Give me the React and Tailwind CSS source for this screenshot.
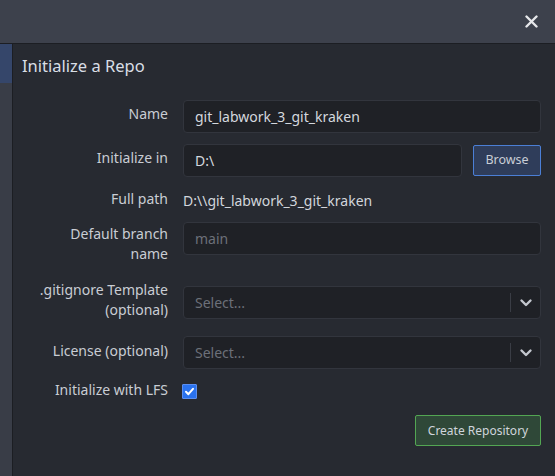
import { useState } from "react";

function Chevron() {
  return (
    <svg width="14" height="14" viewBox="0 0 14 14" fill="none">
      <path d="M2.5 4.5 L7 9 L11.5 4.5" stroke="#c3c7ce" strokeWidth="2.4" strokeLinecap="round" strokeLinejoin="round" />
    </svg>
  );
}

function Label({ children, className = "" }) {
  return (
    <div className={`w-[135px] shrink-0 text-right text-[14px] leading-[20px] text-[#c9cdd4] ${className}`}>
      {children}
    </div>
  );
}

function TextInput({ value, placeholder, className = "" }) {
  return (
    <div className={`h-[33px] flex items-center rounded-[4px] border border-[#32353d] bg-[#1f2126] px-[11px] text-[14px] ${className}`}>
      {value ? (
        <span className="text-[#d4d8de]">{value}</span>
      ) : (
        <span className="text-[#6c7079]">{placeholder}</span>
      )}
    </div>
  );
}

function SelectBox({ className = "" }) {
  return (
    <div className={`h-[33px] flex items-center rounded-[4px] border border-[#32353d] bg-[#1f2126] text-[14px] ${className}`}>
      <span className="flex-1 pl-[11px] text-[#6c7079]">Select...</span>
      <div className="w-px h-[19px] bg-[#3a3d45]" />
      <div className="w-[29px] flex justify-center">
        <Chevron />
      </div>
    </div>
  );
}

export default function App() {
  const [lfs, setLfs] = useState(true);

  return (
    <div className="w-[555px] h-[476px] flex flex-col bg-[#272a31] overflow-hidden" style={{ fontFamily: '"Noto Sans", "Open Sans", sans-serif' }}>
      <header className="h-[44px] shrink-0 flex items-center justify-end pr-[17px] bg-[#3d414c] border-b border-[#1c1e23]">
        <svg width="13" height="13" viewBox="0 0 13 13">
          <path d="M1.5 1.5 L11.5 11.5 M11.5 1.5 L1.5 11.5" stroke="#e6e7ea" strokeWidth="2.4" strokeLinecap="round" />
        </svg>
      </header>

      <div className="flex flex-1">
        <aside className="w-[13px] shrink-0 flex flex-col border-r border-[#1c1e23] bg-[#393d47]">
          <div className="h-[39px] bg-[#35466a]" />
        </aside>

        <main className="flex-1 flex flex-col pl-[9px] pr-[14px]">
          <h1 className="mt-[10px] text-[16.5px] leading-[24px] text-[#d9dee5]">Initialize a Repo</h1>

          <div className="flex flex-col pl-[11px]">
            <div className="mt-[22px] flex items-start gap-[15px]">
              <Label className="mt-[4px]">Name</Label>
              <TextInput value="git_labwork_3_git_kraken" className="flex-1" />
            </div>

            <div className="mt-[11px] flex items-start gap-[15px]">
              <Label className="mt-[4px]">Initialize in</Label>
              <TextInput value="D:\" className="flex-1" />
              <button className="ml-[-4px] h-[31px] mt-px w-[68px] rounded-[2px] border border-[#4b7fd6] bg-[#2f3d5a] text-[12.5px] text-[#c9ced6]">
                Browse
              </button>
            </div>

            <div className="mt-[12px] flex items-start gap-[15px]">
              <Label>Full path</Label>
              <div className="text-[14px] leading-[20px] mt-[2px] text-[#d2d6dc]">D:\\git_labwork_3_git_kraken</div>
            </div>

            <div className="mt-[11px] flex items-start gap-[15px]">
              <Label className="mt-[2px]">Default branch name</Label>
              <TextInput placeholder="main" className="flex-1" />
            </div>

            <div className="mt-[16px] flex items-start gap-[15px]">
              <Label>.gitignore Template (optional)</Label>
              <SelectBox className="flex-1 mt-[6px]" />
            </div>

            <div className="mt-[16px] flex items-start gap-[15px]">
              <Label className="mt-[5px]">License (optional)</Label>
              <SelectBox className="flex-1" />
            </div>

            <div className="mt-[11px] flex items-start gap-[14px]">
              <Label>Initialize with LFS</Label>
              <button
                onClick={() => setLfs(!lfs)}
                className="mt-[4px] w-[15px] h-[15px] flex items-center justify-center rounded-[1px] border border-[#5b8ef0] bg-[#2a72ee]"
              >
                {lfs && (
                  <svg width="11" height="11" viewBox="0 0 11 11">
                    <path d="M2 5.8 L4.4 8.2 L9 2.8" stroke="#ffffff" strokeWidth="2" fill="none" strokeLinecap="round" strokeLinejoin="round" />
                  </svg>
                )}
              </button>
            </div>

            <div className="mt-[15px] flex justify-end">
              <button className="h-[31px] w-[126px] rounded-[2px] border border-[#53a653] bg-[#2f4838] text-[12px] text-[#cfd5dc]">
                Create Repository
              </button>
            </div>
          </div>
        </main>
      </div>
    </div>
  );
}
